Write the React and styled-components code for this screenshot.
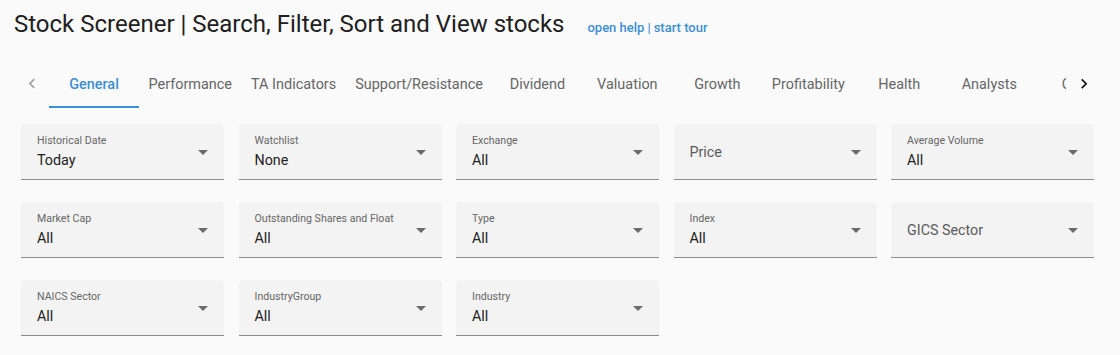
import React from "react";
import styled, { createGlobalStyle } from "styled-components";

const Global = createGlobalStyle`
  html, body { margin: 0; padding: 0; background: #fafafa; }
  body { font-family: Roboto, "Noto Sans", Arial, sans-serif; color: #222; }
  * { box-sizing: border-box; }
`;

const Page = styled.div`
  width: 1120px;
  height: 355px;
  padding: 8px 0 0 14px;
  overflow: hidden;
  background: #fafafa;
`;

const Header = styled.div`
  display: flex;
  align-items: baseline;
  gap: 23px;
  height: 32px;
`;

const Title = styled.h1`
  margin: 0;
  font-size: 24px;
  line-height: 32px;
  font-weight: 400;
  color: #202020;
`;

const Links = styled.div`
  font-size: 13px;
  font-weight: 500;
  color: #3d8fd4;
  display: flex;
  gap: 3px;
`;

const LinkText = styled.a`
  color: #3d8fd4;
  text-decoration: none;
  cursor: pointer;
`;

const TabBar = styled.div`
  display: flex;
  height: 48px;
  margin: 20px 19px 0 0;
`;

const ScrollBtn = styled.div`
  width: 35px;
  flex: 0 0 35px;
  display: flex;
  align-items: center;
  justify-content: center;
  color: ${(p) => (p.$disabled ? "#9e9e9e" : "#111")};
`;

const Scroller = styled.div`
  flex: 1;
  overflow: hidden;
  display: flex;
  white-space: nowrap;
`;

const Tab = styled.div`
  position: relative;
  flex: 0 0 auto;
  min-width: 90px;
  padding: 0 9.5px;
  display: flex;
  align-items: center;
  justify-content: center;
  font-size: 14.45px;
  color: ${(p) => (p.$active ? "#3d8fd4" : "#666")};
  font-weight: ${(p) => (p.$active ? 500 : 400)};
  &::after {
    content: "";
    display: ${(p) => (p.$active ? "block" : "none")};
    position: absolute;
    left: 0;
    right: 0;
    bottom: 0;
    height: 2px;
    background: #3d8fd4;
  }
`;

const Grid = styled.div`
  display: grid;
  grid-template-columns: repeat(5, 203px);
  column-gap: 14.5px;
  row-gap: 22px;
  margin: 16px 0 0 7px;
`;

const Field = styled.div`
  position: relative;
  height: 56px;
  background: #f3f3f3;
  border-radius: 4px 4px 0 0;
  border-bottom: 1px solid #8c8c8c;
  padding: ${(p) => (p.$empty ? "0 36px 0 16px" : "10px 36px 0 16px")};
  display: flex;
  flex-direction: column;
  justify-content: ${(p) => (p.$empty ? "center" : "flex-start")};
`;

const Label = styled.div`
  font-size: 10.6px;
  line-height: 14px;
  color: #666;
  white-space: nowrap;
`;

const Placeholder = styled.div`
  font-size: 14.3px;
  line-height: 20px;
  color: #5a5a5a;
`;

const Value = styled.div`
  margin-top: 2px;
  font-size: 14.3px;
  line-height: 20px;
  color: #222;
`;

const Caret = styled.svg`
  position: absolute;
  right: 9px;
  top: 50%;
  margin-top: -12px;
  width: 24px;
  height: 24px;
  fill: #6b6b6b;
`;

const tabs = [
  "General",
  "Performance",
  "TA Indicators",
  "Support/Resistance",
  "Dividend",
  "Valuation",
  "Growth",
  "Profitability",
  "Health",
  "Analysts",
  "Other",
];

const fields = [
  ["Historical Date", "Today"],
  ["Watchlist", "None"],
  ["Exchange", "All"],
  ["Price", null],
  ["Average Volume", "All"],
  ["Market Cap", "All"],
  ["Outstanding Shares and Float", "All"],
  ["Type", "All"],
  ["Index", "All"],
  ["GICS Sector", null],
  ["NAICS Sector", "All"],
  ["IndustryGroup", "All"],
  ["Industry", "All"],
];

function SelectField({ label, value }) {
  const empty = value == null;
  return (
    <Field $empty={empty}>
      {empty ? (
        <Placeholder>{label}</Placeholder>
      ) : (
        <>
          <Label>{label}</Label>
          <Value>{value}</Value>
        </>
      )}
      <Caret viewBox="0 0 24 24">
        <path d="M7 10l5 5 5-5z" />
      </Caret>
    </Field>
  );
}

export default function App() {
  return (
    <>
      <Global />
      <Page>
        <Header>
          <Title>Stock Screener | Search, Filter, Sort and View stocks</Title>
          <Links>
            <LinkText>open help</LinkText>
            <span>|</span>
            <LinkText>start tour</LinkText>
          </Links>
        </Header>
        <TabBar>
          <ScrollBtn $disabled>
            <svg width="20" height="20" viewBox="0 0 24 24" fill="currentColor">
              <path d="M15.41 16.09l-4.58-4.59 4.58-4.59L14 5.5l-6 6 6 6z" />
            </svg>
          </ScrollBtn>
          <Scroller>
            {tabs.map((t, i) => (
              <Tab key={t} $active={i === 0}>
                {t}
              </Tab>
            ))}
          </Scroller>
          <ScrollBtn>
            <svg width="20" height="20" viewBox="0 0 24 24" fill="currentColor">
              <path d="M8.59 16.34l4.58-4.59-4.58-4.59L10 5.75l6 6-6 6z" />
            </svg>
          </ScrollBtn>
        </TabBar>
        <Grid>
          {fields.map(([l, v]) => (
            <SelectField key={l} label={l} value={v} />
          ))}
        </Grid>
      </Page>
    </>
  );
}
